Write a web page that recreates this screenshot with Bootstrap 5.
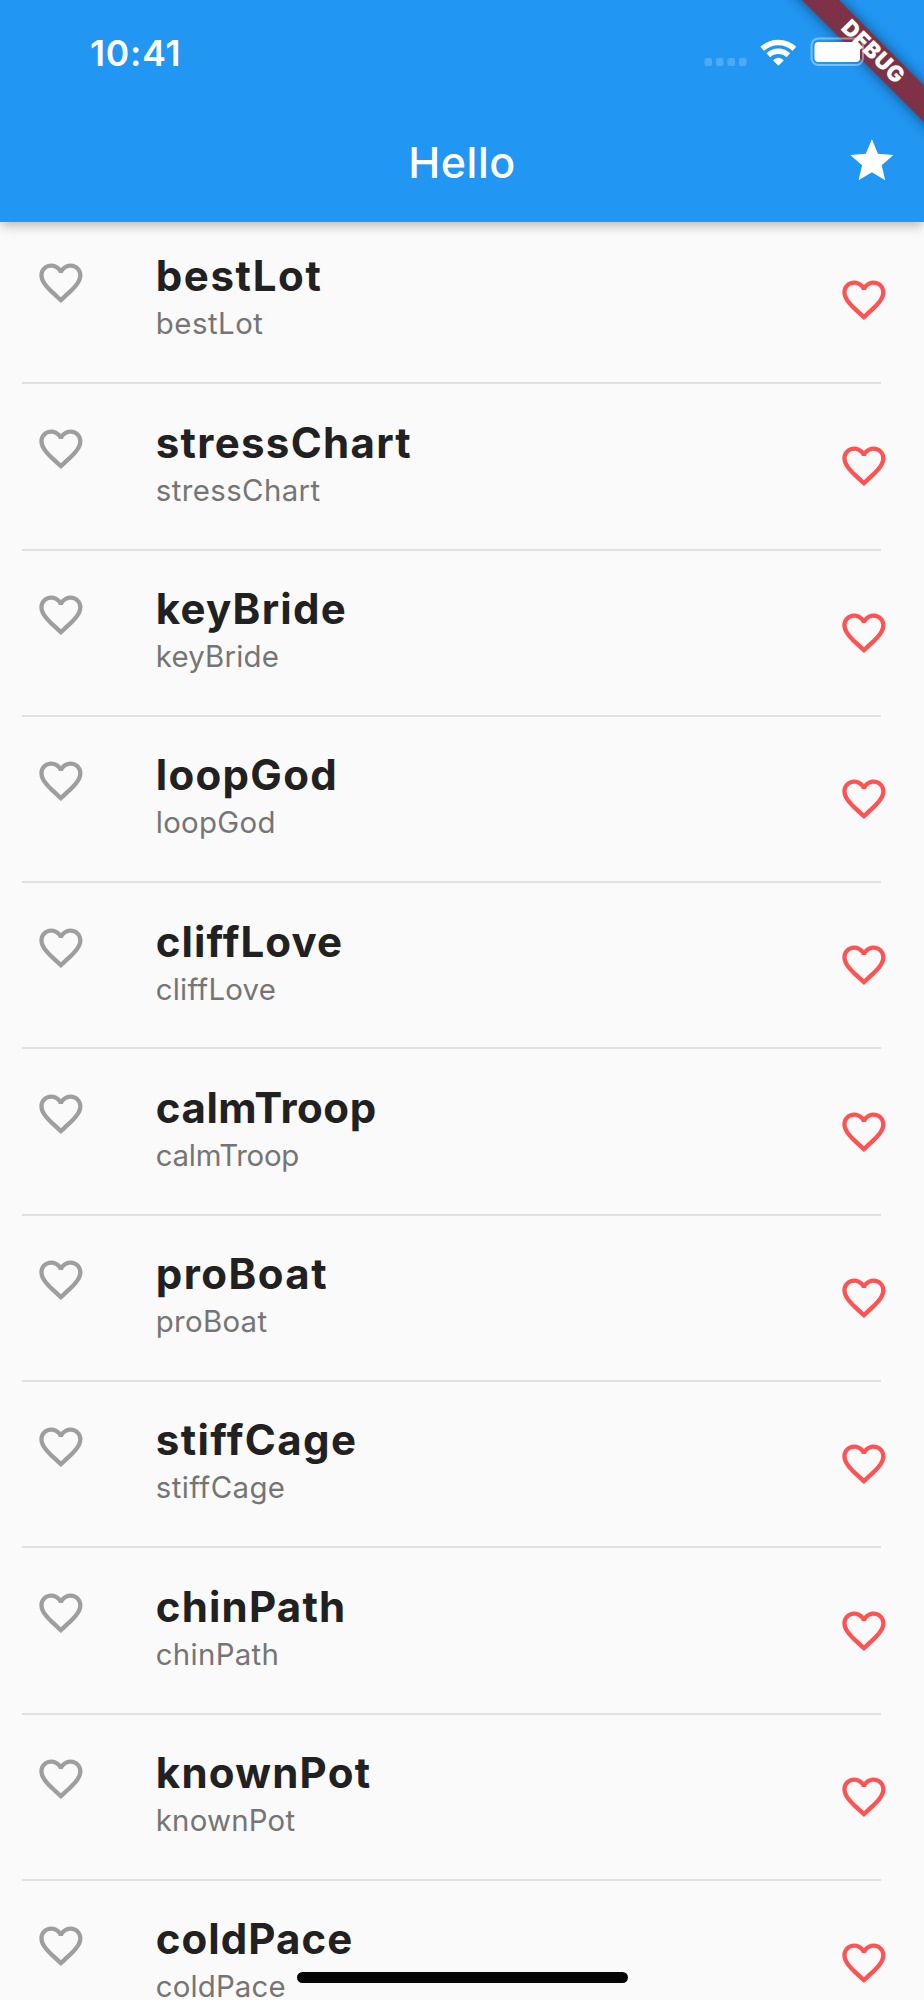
<!DOCTYPE html>
<html lang="en">
<head>
<meta charset="utf-8">
<meta name="viewport" content="width=device-width, initial-scale=1">
<title>Hello</title>
<link href="https://cdn.jsdelivr.net/npm/bootstrap@5.3.0/dist/css/bootstrap.min.css" rel="stylesheet">
<style>
body{font-family:Inter,"Liberation Sans",sans-serif;background:#fafafa;color:#212121}
.screen{height:2000px}
.app-header{height:222.4px;background:#2196f3;z-index:2;box-shadow:0 4px 9px -2px rgba(0,0,0,.14),0 8px 11px rgba(0,0,0,.07),0 2px 12px rgba(0,0,0,.08)}
.status-bar{height:107px;padding-left:90px}
.clock{font-size:35.5px;font-weight:600;line-height:1;letter-spacing:.8px}
.app-bar{height:110px}
.app-title{font-size:43px;font-weight:500;line-height:1;letter-spacing:.5px}
.star{right:26px;top:28.4px}
.ribbon{z-index:3}
.word-list{margin-top:-4.4px}
.word-row{height:166.3px;padding:0 43.2px 0 21.6px}
.word-line{border-bottom:2px solid #e0e0e0}
.lead-icon{margin:38.6px 0 0 13px;color:#9e9e9e}
.trail-icon{margin:56.2px -9px 0 auto;color:#ff5252}
.words{margin:34.4px 0 0 69.4px}
.word-title{font-size:42px;font-weight:700;line-height:48px;font-variant-ligatures:none}
.word-sub{font-size:29.4px;line-height:32px;color:#757575;margin-top:8px;font-variant-ligatures:none}
.home-bar{left:297px;top:1972px;width:331px;height:11px;border-radius:6px;background:#050505;z-index:3}
</style>
</head>
<body>
<svg class="d-none"><symbol id="heart" viewBox="0 0 24 24"><path fill="currentColor" d="M16.5 3c-1.74 0-3.41.81-4.5 2.09C10.91 3.81 9.24 3 7.5 3 4.42 3 2 5.42 2 8.5c0 3.78 3.4 6.86 8.55 11.54L12 21.35l1.45-1.32C18.6 15.36 22 12.28 22 8.5 22 5.42 19.58 3 16.5 3zm-4.4 15.55l-.1.1-.1-.1C7.14 14.24 4 11.39 4 8.5 4 6.5 5.5 5 7.5 5c1.54 0 3.04.99 3.57 2.36h1.87C13.46 5.99 14.96 5 16.5 5c2 0 3.5 1.5 3.5 3.5 0 2.89-3.14 5.74-7.9 10.05z"/></symbol></svg>
<main class="screen position-relative overflow-hidden">
  <header class="app-header position-relative text-white">
    <div class="status-bar d-flex align-items-center"><span class="clock">10:41</span></div>
    <div class="app-bar d-flex align-items-center justify-content-center position-relative">
      <h1 class="app-title m-0">Hello</h1>
      <svg class="star position-absolute" width="51.8" height="51.8" viewBox="0 0 24 24" fill="#fff"><path d="M12 17.27L18.18 21l-1.64-7.03L22 9.24l-7.19-.61L12 2 9.19 8.63 2 9.24l5.46 4.73L5.82 21z"/></svg>
    </div>
  </header>
  <svg class="ribbon position-absolute top-0 end-0" width="224" height="140" viewBox="700 0 224 140">
    <defs><filter id="soft" x="-50%" y="-50%" width="200%" height="200%"><feGaussianBlur stdDeviation="6.5"/></filter></defs>
    <path d="M782-20H819L944 106V142Z" fill="#000" opacity=".5" filter="url(#soft)"/>
    <path d="M782-20H819L944 106V142Z" fill="#7e3248"/>
    <g fill="#fff" fill-opacity=".2"><rect x="704.5" y="58" width="7.5" height="8" rx="2"/><rect x="716" y="58" width="7.5" height="8" rx="2"/><rect x="727.5" y="58" width="7.5" height="8" rx="2"/><rect x="739" y="58" width="7.5" height="8" rx="2"/></g>
    <g fill="none" stroke="#fff" stroke-width="5.4"><path d="M762.2 48.8a23.6 23.6 0 0 1 32.2 0"/><path d="M768.3 55.2a14.5 14.5 0 0 1 20 0"/></g>
    <path d="M773 60.200q5.400-5 10.800 0l-5.400 5.600z" fill="#fff"/>
    <rect x="811.500" y="38.500" width="51.500" height="26.500" rx="7" fill="none" stroke="#fff" stroke-opacity=".4" stroke-width="2"/>
    <rect x="814.500" y="42" width="45.500" height="20" rx="4" fill="#fff"/>
    <text transform="translate(873.600 51.400) rotate(45)" text-anchor="middle" y="8" font-family="Inter, sans-serif" font-weight="900" font-size="22" letter-spacing=".5" fill="#fff">DEBUG</text>
  </svg>
  <ul id="words" class="word-list list-unstyled mb-0"></ul>
  <div class="home-bar position-absolute"></div>
</main>
<script src="https://cdn.jsdelivr.net/npm/bootstrap@5.3.0/dist/js/bootstrap.bundle.min.js"></script>
<script>
// [word, title tracking, subtitle tracking] in px
const words=[['bestLot',1.6,.5],['stressChart',1.3,.4],['keyBride',1.25,.2],['loopGod',1.3,.3],['cliffLove',1.1,.2],['calmTroop',.55,-.25],['proBoat',1.45,.3],['stiffCage',1.4,.4],['chinPath',1.2,.3],['knownPot',1.25,.2],['coldPace',1.05,.15]];
const heart=c=>`<svg class="${c} flex-shrink-0" width="51.8" height="51.8"><use href="#heart"/></svg>`;
document.getElementById('words').innerHTML=words.map(([n,t,s])=>`<li class="word-row"><div class="word-line d-flex align-items-start h-100">${heart('lead-icon')}<div class="words"><div class="word-title" style="letter-spacing:${t}px">${n}</div><div class="word-sub" style="letter-spacing:${s}px">${n}</div></div>${heart('trail-icon')}</div></li>`).join('');
</script>
</body>
</html>
